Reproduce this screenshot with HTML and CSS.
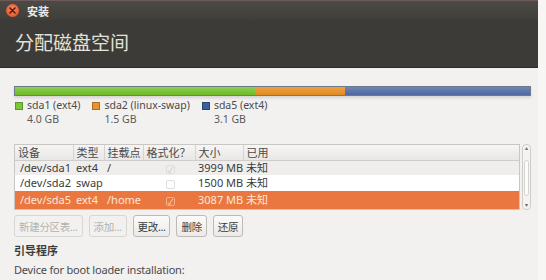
FILE: index.html
```html
<!DOCTYPE html>
<html lang="zh-CN">

<head>
    <meta charset="UTF-8">
    <title>安装</title>
    <link rel="stylesheet" href="styles.css">
</head>

<body>
    <div class="window">
        <div class="titlebar">
            <span class="close-btn">
                <svg width="9" height="9" viewBox="0 0 9 9">
                    <path d="M2 2 L7 7 M7 2 L2 7" stroke="#5a1a10" stroke-width="1.6" stroke-linecap="round" />
                </svg>
            </span>
            <span class="win-title">安装</span>
        </div>
        <div class="header">
            <h1>分配磁盘空间</h1>
        </div>
        <div class="content">
            <div class="disk-bar">
                <div class="part green" style="width: 46.6%"></div>
                <div class="part orange" style="width: 17.4%"></div>
                <div class="part blue" style="width: 36%"></div>
            </div>
            <div class="legend">
                <div class="legend-item">
                    <span class="swatch green"></span>
                    <div>
                        <div class="legend-name">sda1 (ext4)</div>
                        <div class="legend-size">4.0 GB</div>
                    </div>
                </div>
                <div class="legend-item">
                    <span class="swatch orange"></span>
                    <div>
                        <div class="legend-name">sda2 (linux-swap)</div>
                        <div class="legend-size">1.5 GB</div>
                    </div>
                </div>
                <div class="legend-item">
                    <span class="swatch blue"></span>
                    <div>
                        <div class="legend-name">sda5 (ext4)</div>
                        <div class="legend-size">3.1 GB</div>
                    </div>
                </div>
            </div>

            <div class="table-wrap">
                <div class="table-box">
                    <table class="part-table head-table">
                        <tr>
                            <td class="c-dev">设备</td>
                            <td class="c-type">类型</td>
                            <td class="c-mount">挂载点</td>
                            <td class="c-fmt">格式化？</td>
                            <td class="c-size">大小</td>
                            <td class="c-used">已用</td>
                        </tr>
                    </table>
                    <div class="viewport">
                        <table class="part-table body-table">
                            <tr class="row first">
                                <td class="c-dev">/dev/sda1</td>
                                <td class="c-type">ext4</td>
                                <td class="c-mount">/</td>
                                <td class="c-fmt center"><span class="check">✓</span></td>
                                <td class="c-size">3999 MB</td>
                                <td class="c-used">未知</td>
                            </tr>
                            <tr class="row">
                                <td>/dev/sda2</td>
                                <td>swap</td>
                                <td></td>
                                <td class="center"><span class="check"></span></td>
                                <td>1500 MB</td>
                                <td>未知</td>
                            </tr>
                            <tr class="row selected">
                                <td>/dev/sda5</td>
                                <td>ext4</td>
                                <td>/home</td>
                                <td class="center"><span class="check">✓</span></td>
                                <td>3087 MB</td>
                                <td>未知</td>
                            </tr>
                        </table>
                    </div>
                </div>
                <div class="scrollbar">
                    <span class="arrow">▴</span>
                    <div class="thumb"></div>
                    <span class="arrow">▾</span>
                </div>
            </div>

            <div class="buttons">
                <button disabled>新建分区表...</button>
                <button disabled>添加...</button>
                <button>更改...</button>
                <button>删除</button>
                <button>还原</button>
            </div>

            <div class="section-title">引导程序</div>
            <div class="label">Device for boot loader installation:</div>
            <div class="combo"></div>
        </div>
    </div>
</body>

</html>
```

FILE: styles.css
```css
* {
    box-sizing: border-box;
}

body {
    margin: 0;
    width: 546px;
    height: 280px;
    overflow: hidden;
    background: #f2f1f0;
    font-family: "Noto Sans", "Noto Sans CJK SC", sans-serif;
    font-size: 11px;
    color: #3c3c3c;
}

.window {
    width: 546px;
    height: 280px;
    overflow: hidden;
    border-right: 8px solid #f7f6f5;
}

.titlebar {
    height: 20px;
    display: flex;
    align-items: center;
    padding-left: 6px;
    background: linear-gradient(#4b4a45, #3f3e3a);
    border-top: 1px solid #6e5a5a;
}

.close-btn {
    width: 13px;
    height: 13px;
    border-radius: 50%;
    background: radial-gradient(circle at 50% 40%, #f78a5e, #dd4a22);
    display: flex;
    align-items: center;
    justify-content: center;
}

.win-title {
    margin-left: 8px;
    color: #ececec;
    font-weight: bold;
    font-size: 11px;
}

.header {
    height: 48px;
    background: #3c3b37;
    padding: 11px 0 0 15px;
    border-bottom: 1px solid #2d2c29;
}

.header h1 {
    margin: 0;
    font-weight: normal;
    font-size: 19px;
    line-height: 24px;
    color: #e4e1da;
}

.content {
    padding: 18px 0 0 14px;
}

.disk-bar {
    width: 517px;
    height: 10px;
    display: flex;
    border: 1px solid #6c7a8c;
    box-shadow: 0 2px 3px rgba(0, 0, 0, 0.12);
}

.part.green {
    background: linear-gradient(#8fd24b, #6cb92a);
}

.part.orange {
    background: linear-gradient(#f0a040, #e08a25);
}

.part.blue {
    background: linear-gradient(#6d86b8, #4d68a0);
}

.legend {
    display: flex;
    margin-top: 2px;
    font-size: 10.5px;
}

.legend-item {
    display: flex;
    align-items: flex-start;
    margin-right: 11px;
}

.swatch {
    width: 8px;
    height: 8px;
    margin: 4px 4px 0 1px;
    border: 1px solid rgba(0, 0, 0, 0.25);
}

.swatch.green {
    background: #7cc63a;
}

.swatch.orange {
    background: #e8932e;
}

.swatch.blue {
    background: #3d5e96;
}

.legend-name {
    line-height: 14px;
    color: #4a4a4a;
}

.legend-size {
    line-height: 14px;
    color: #5a5a5a;
}

.table-wrap {
    display: flex;
    margin-top: 18px;
    width: 517px;
}

.table-box {
    width: 506px;
    height: 66px;
    overflow: hidden;
    border: 1px solid #c9c7c3;
    background: #ffffff;
}

.part-table {
    width: 100%;
    table-layout: fixed;
    border-collapse: collapse;
    font-size: 11px;
}

.part-table td {
    padding: 0 0 0 3px;
    white-space: nowrap;
    overflow: hidden;
}

.head-table td {
    height: 15px;
    line-height: 15px;
    background: linear-gradient(#f6f5f4, #e8e7e5);
    border-right: 1px solid #d6d4d0;
    border-bottom: 1px solid #cfcdc9;
    color: #4a4a4a;
}

.head-table td:last-child {
    border-right: none;
}

.c-dev {
    width: 58px;
}

.c-type {
    width: 31px;
}

.c-mount {
    width: 39px;
}

.c-fmt {
    width: 52px;
}

.c-size {
    width: 48px;
}

.viewport {
    height: 48px;
    overflow: hidden;
}

.body-table .row td {
    height: 16px;
    line-height: 16px;
    color: #3c3c3c;
}

.body-table .row.first td {
    height: 14px;
    line-height: 12px;
    background: #efeeec;
}

.body-table .row td:first-child {
    padding-left: 5px;
}

.body-table .row.selected td {
    height: 18px;
    background: #e9773f;
    color: #fde6d8;
}

.center {
    text-align: center;
}

.check {
    display: inline-block;
    width: 9px;
    height: 9px;
    border: 1px solid #e0dedb;
    border-radius: 2px;
    font-size: 8px;
    line-height: 8px;
    color: #c8c6c2;
    vertical-align: middle;
}

.selected .check {
    border-color: #f3b08e;
    color: #ffe4d4;
}

.scrollbar {
    width: 9px;
    height: 66px;
    margin-left: 2px;
    border: 1px solid #cfcdc9;
    border-radius: 4px;
    background: #f4f3f2;
    display: flex;
    flex-direction: column;
    align-items: center;
}

.arrow {
    font-size: 6px;
    line-height: 7px;
    color: #6a6a6a;
}

.thumb {
    flex: 1;
    width: 5px;
    margin: 8px 0 6px;
    border: 1px solid #d6d4d0;
    border-radius: 3px;
    background: #fbfbfa;
}

.buttons {
    display: flex;
    margin-top: 5px;
}

.buttons button {
    height: 22px;
    margin-right: 6px;
    padding: 0 4px;
    font-family: "Noto Sans", "Noto Sans CJK SC", sans-serif;
    font-size: 10.5px;
    letter-spacing: -0.3px;
    color: #3c3c3c;
    background: linear-gradient(#fbfbfa, #ebeae8);
    border: 1px solid #bdbbb7;
    border-radius: 3px;
}

.buttons button:disabled {
    color: #b3b1ad;
    border-color: #d8d6d2;
    background: #f2f1f0;
}

.section-title {
    margin-top: 7px;
    font-weight: bold;
    font-size: 11px;
    line-height: 14px;
    color: #3c3c3c;
}

.label {
    margin-top: 5px;
    line-height: 14px;
    color: #4a4a4a;
    letter-spacing: -0.2px;
}

.combo {
    margin-top: 4px;
    width: 517px;
    height: 24px;
    border: 1px solid #b9b7b3;
    border-radius: 3px;
    background: linear-gradient(#fbfbfa, #ecebe9);
}
```
